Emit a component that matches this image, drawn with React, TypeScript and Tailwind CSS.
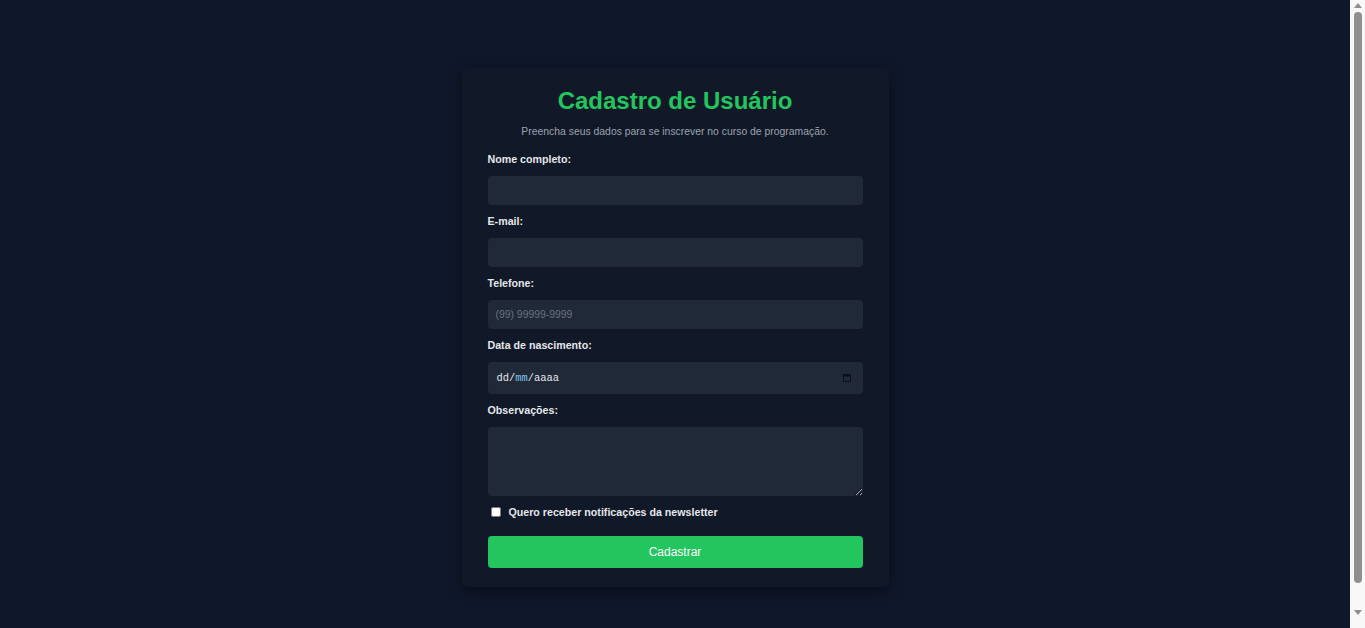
import React from "react";

const Label = ({ children }: { children: React.ReactNode }) => (
  <label className="block h-[12px] text-[10.67px] leading-[12px] font-bold text-[#e5e7eb] mb-[11px]">
    {children}
  </label>
);

export default function App() {
  return (
    <div
      className="flex bg-[#0f172a]"
      style={{ fontFamily: '"Liberation Sans", Arial, sans-serif' }}
    >
      <main className="flex-1 min-h-screen pt-[68px] pb-[71px]">
        <div className="w-[427px] mx-auto bg-[#111827] rounded-[6px] shadow-[0_4px_14px_rgba(0,0,0,0.45)] px-[26px] pt-[19px] pb-[19px]">
          <h1 className="text-[24px] leading-[28px] h-[28px] font-bold text-[#22c55e] text-center">
            Cadastro de Usuário
          </h1>
          <p className="mt-[11px] text-[10.4px] leading-[12px] h-[12px] text-[#9ca3af] text-center">
            Preencha seus dados para se inscrever no curso de programação.
          </p>

          <div className="mt-[15px]">
            <Label>Nome completo:</Label>
            <input
              type="text"
              className="block w-full h-[29px] rounded-[4px] bg-[#1f2937] px-[8px] text-[10.67px] text-[#e5e7eb] outline-none"
            />
          </div>

          <div className="mt-[10px]">
            <Label>E-mail:</Label>
            <input
              type="email"
              className="block w-full h-[29px] rounded-[4px] bg-[#1f2937] px-[8px] text-[10.67px] text-[#e5e7eb] outline-none"
            />
          </div>

          <div className="mt-[10px]">
            <Label>Telefone:</Label>
            <input
              type="text"
              placeholder="(99) 99999-9999"
              className="block w-full h-[29px] rounded-[4px] bg-[#1f2937] px-[8px] text-[10.4px] text-[#e5e7eb] placeholder:text-[#6b7280] outline-none"
            />
          </div>

          <div className="mt-[10px]">
            <Label>Data de nascimento:</Label>
            <div className="flex items-center justify-between w-full h-[32px] rounded-[4px] bg-[#1f2937] pl-[9px] pr-[12px]">
              <span
                className="text-[10.4px] leading-[12px] text-[#e5e7eb]"
                style={{ fontFamily: '"Liberation Mono", "DejaVu Sans Mono", monospace' }}
              >
                dd/<span className="text-[#7cc4ee]">mm</span>/aaaa
              </span>
              <svg width="8" height="8" viewBox="0 0 8 8" className="block">
                <rect x="0.5" y="0.5" width="7" height="7" fill="none" stroke="#0b0f17" strokeWidth="1" />
                <rect x="0" y="0" width="8" height="2.5" fill="#0b0f17" />
              </svg>
            </div>
          </div>

          <div className="mt-[10px]">
            <Label>Observações:</Label>
            <textarea className="block w-full h-[69px] rounded-[4px] bg-[#1f2937] px-[8px] py-[6px] text-[10.67px] text-[#e5e7eb] outline-none" />
          </div>

          <div className="mt-[10px] flex items-center h-[12px]">
            <input type="checkbox" className="w-[10px] h-[10px] ml-[3px] mr-[8px] m-0" />
            <span className="text-[10.67px] leading-[12px] font-bold text-[#e5e7eb]">
              Quero receber notificações da newsletter
            </span>
          </div>

          <button className="mt-[18px] block w-full h-[32px] rounded-[4px] bg-[#22c55e] text-white text-[12px]">
            Cadastrar
          </button>
        </div>
      </main>

      <aside className="sticky top-0 self-start h-screen w-[15px] shrink-0 bg-[#f8f8f8] flex flex-col items-center pt-[3px] pb-[13px]">
        <svg width="8" height="5" viewBox="0 0 8 5" className="block">
          <polygon points="4,0 8,5 0,5" fill="#8f8f8f" />
        </svg>
        <div className="mt-[4px] h-[571px] w-[8px] rounded-full bg-[#8f8f8f]" />
        <div className="flex-1" />
        <svg width="8" height="5" viewBox="0 0 8 5" className="block">
          <polygon points="0,0 8,0 4,5" fill="#8f8f8f" />
        </svg>
      </aside>
    </div>
  );
}
